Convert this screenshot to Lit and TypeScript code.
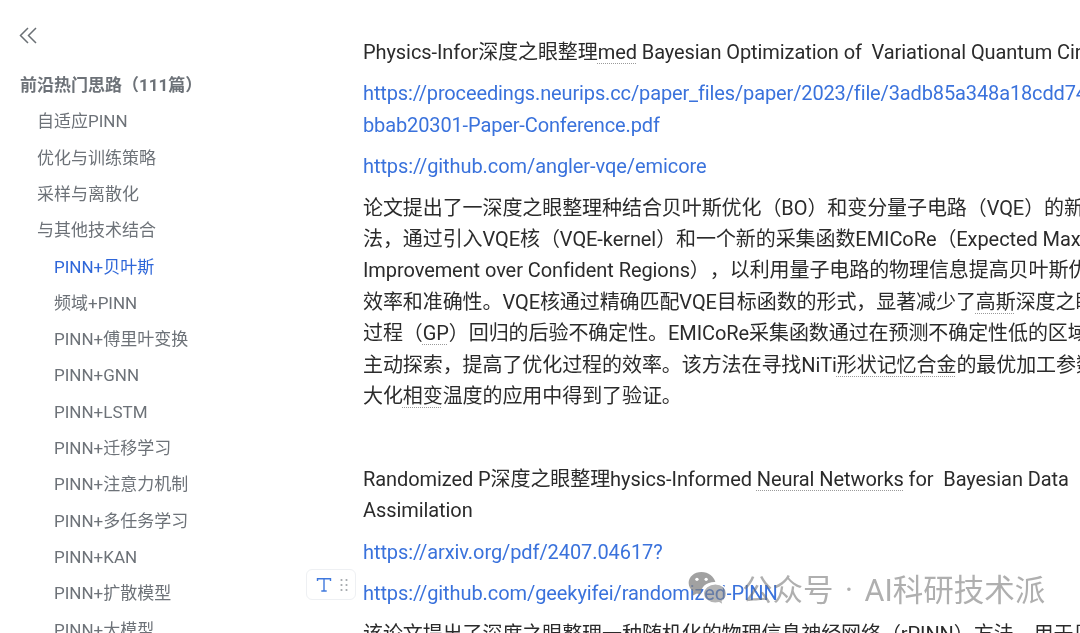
import { LitElement, html, css } from "lit";
import { customElement } from "lit/decorators.js";

const NAV: [string, number, boolean?][] = [
  ["自适应PINN", 1], ["优化与训练策略", 1], ["采样与离散化", 1], ["与其他技术结合", 1],
  ["PINN+贝叶斯", 2, true], ["频域+PINN", 2], ["PINN+傅里叶变换", 2], ["PINN+GNN", 2],
  ["PINN+LSTM", 2], ["PINN+迁移学习", 2], ["PINN+注意力机制", 2], ["PINN+多任务学习", 2],
  ["PINN+KAN", 2], ["PINN+扩散模型", 2], ["PINN+大模型", 2],
];

@customElement("app-root")
export class AppRoot extends LitElement {
  static styles = css`
    :host {
      display: flex; width: 1080px; height: 633px; overflow: hidden; position: relative;
      background: #fff; font-family: Roboto, "Noto Sans CJK SC", sans-serif;
      text-spacing-trim: space-all;
      filter: blur(0.35px);
    }
    .side { width: 363px; flex: none; padding: 25px 0 0 20px; box-sizing: border-box; color: #6d7278; }
    .collapse { display: block; margin-left: -2px; width: 20px; height: 20px; color: #6b7075; }
    .head { margin-top: 22px; font-size: 17px; line-height: 36.4px; font-weight: 700; white-space: nowrap; }
    .item { font-size: 17px; line-height: 36.3px; white-space: nowrap; }
    .l1 { padding-left: 18px; margin-left: -1px; }
    .l2 { padding-left: 35px; margin-left: -1px; }
    .on { color: #2e66d9; }
    .main { flex: 1; min-width: 0; padding-top: 37px; color: #2b2b2b; font-size: 20px; line-height: 31.4px; letter-spacing: -0.08px; }
    p { margin: 0 0 10px; min-height: 31.4px; white-space: pre; }
    a { color: #3a72dc; text-decoration: none; }
    .url { letter-spacing: -0.13px; }
    .u { text-decoration: underline dotted #9a9a9a 1px; text-underline-offset: 4px; text-decoration-skip-ink: none; }
    .tool {
      position: absolute; left: 306px; top: 569px; width: 50px; height: 31px; box-sizing: border-box;
      display: flex; align-items: center; gap: 8px; padding-left: 9px;
      background: #fff; border: 1px solid #eef0f3; border-radius: 6px;
    }
    .mark {
      position: absolute; left: 687px; top: 570px; display: flex; align-items: center; gap: 13px;
      font-size: 30.5px; line-height: 42px; word-spacing: 4px; color: rgba(110,110,110,.55); white-space: pre;
    }
    .mark svg { margin-top: -6px; }
  `;

  render() {
    return html`
      <aside class="side">
        <svg class="collapse" viewBox="0 0 20 20" fill="none" stroke="currentColor" stroke-width="1.5">
          <path d="M10 3 2.500 10.500 10 18M18 3l-7.500 7.500L18 18" />
        </svg>
        <div class="head">前沿热门思路（111篇）</div>
        ${NAV.map(([t, l, on]) => html`<div class="item l${l} ${on ? "on" : ""}">${t}</div>`)}
      </aside>
      <main class="main">
        <p>Physics-Infor深度之眼整理<span class="u">med</span> Bayesian Optimization of  Variational Quantum Circuits</p>
        <p><a class="url">https://proceedings.neurips.cc/paper_files/paper/2023/file/3adb85a348a18cdd74ce99fbbab20301
bbab20301-Paper-Conference.pdf</a></p>
        <p><a>https://github.com/angler-vqe/emicore</a></p>
        <p>论文提出了一深度之眼整理种结合贝叶斯优化（BO）和变分量子电路（VQE）的新型方
法，通过引入VQE核（VQE-kernel）和一个新的采集函数EMICoRe（Expected Maximum
Improvement over Confident Regions），以利用量子电路的物理信息提高贝叶斯优化的
效率和准确性。VQE核通过精确匹配VQE目标函数的形式，显著减少了<span class="u">高斯</span>深度之眼整理
过程（<span class="u">GP</span>）回归的后验不确定性。EMICoRe采集函数通过在预测不确定性低的区域进行
主动探索，提高了优化过程的效率。该方法在寻找NiTi<span class="u">形状记忆合金</span>的最优加工参数以最
大化<span class="u">相变</span>温度的应用中得到了验证。</p>
        <p></p>
        <p>Randomized P深度之眼整理hysics-Informed <span class="u">Neural Networks</span> for  Bayesian Data
Assimilation</p>
        <p><a>https://arxiv.org/pdf/2407.04617?</a></p>
        <p><a>https://github.com/geekyifei/randomized-PINN</a></p>
        <p>该论文提出了深度之眼整理一种随机化的物理信息神经网络（rPINN）方法，用于贝叶斯</p>
      </main>
      <div class="tool">
        <svg width="16" height="16" viewBox="0 0 16 16" fill="none" stroke="#3f78dd" stroke-width="1.4">
          <path d="M1.500 4V1.800h13V4M8 1.800V14M5.300 14h5.400" />
        </svg>
        <svg width="8" height="14" viewBox="0 0 8 14" fill="#a3a7ab">
          <circle cx="1.500" cy="2" r="1.100" /><circle cx="6.500" cy="2" r="1.100" />
          <circle cx="1.500" cy="7" r="1.100" /><circle cx="6.500" cy="7" r="1.100" />
          <circle cx="1.500" cy="12" r="1.100" /><circle cx="6.500" cy="12" r="1.100" />
        </svg>
      </div>
      <div class="mark">
        <svg width="42" height="35" viewBox="0 0 44 38">
          <path fill="rgba(130,130,130,.75)" d="M15 1C7 1 1 6.300 1 13c0 3.800 2 7 5 9.200L5 27l5-2.700c1.400.4 2.900.6 4.500.6C14 17 21 11.500 30 12 28.500 5.800 22.500 1 15 1Z" />
          <path fill="rgba(130,130,130,.6)" stroke="#fff" stroke-width="1.500" d="M30 14c-7.200 0-13 4.700-13 10.500S22.800 35 30 35c1.400 0 2.700-.2 4-.5l4.500 2.500-1-4.200c3-2 4.500-4.800 4.500-7.800C42.500 18.700 37.200 14 30 14Z" />
          <circle cx="10" cy="9" r="1.800" fill="#fff" /><circle cx="20" cy="9" r="1.800" fill="#fff" />
        </svg>
        <span>公众号 · AI科研技术派</span>
      </div>
    `;
  }
}
